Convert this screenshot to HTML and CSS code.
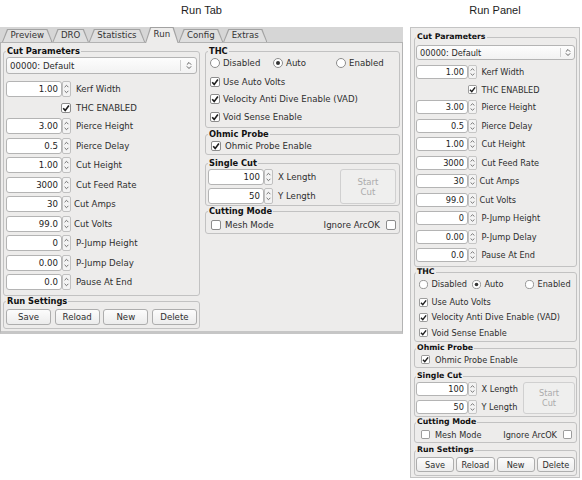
FILE: index.html
```html
<!DOCTYPE html>
<html>
<head>
<meta charset="utf-8">
<title>Run Tab / Run Panel</title>
<link rel="stylesheet" href="styles.css">
</head>
<body>
<div class="screen">
  <section class="col col-tab">
    <div class="caption">Run Tab</div>
    <div class="tabwidget">
      <div class="tabbar">
        <div class="tab"><span>Preview</span></div>
        <div class="tab"><span>DRO</span></div>
        <div class="tab"><span>Statistics</span></div>
        <div class="tab active"><span>Run</span></div>
        <div class="tab"><span>Config</span></div>
        <div class="tab"><span>Extras</span></div>
      </div>
      <div class="pane ui ui-tab">
        <div class="pane-col c1">
          <div class="group g-cut">
            <div class="group-title">Cut Parameters</div>
            <div class="combo"><span class="combo-text">00000: Default</span><span class="combo-btn"><svg viewBox="0 0 7 10"><path d="M1 4 3.5 1.5 6 4M1 6 3.5 8.5 6 6"/></svg></span></div>
            <div class="rows">
              <div class="field"><div class="spin"><span class="spin-val">1.00</span><svg class="arrows" viewBox="0 0 9 16" preserveAspectRatio="none"><rect x=".5" y=".5" width="8" height="15" rx="1.5"/><path d="M2.6 6.2 4.5 4.3 6.4 6.2M2.6 9.8 4.5 11.7 6.4 9.8"/></svg></div><span class="lbl">Kerf Width</span></div>
              <div class="field field-check"><svg class="ind" viewBox="0 0 10 10"><rect class="box" x=".5" y=".5" width="9" height="9" rx="1.5"/><path class="tick" d="M2.2 5.2 4.2 7.4 7.9 2.6"/></svg><span class="lbl">THC ENABLED</span></div>
              <div class="field"><div class="spin"><span class="spin-val">3.00</span><svg class="arrows" viewBox="0 0 9 16" preserveAspectRatio="none"><rect x=".5" y=".5" width="8" height="15" rx="1.5"/><path d="M2.6 6.2 4.5 4.3 6.4 6.2M2.6 9.8 4.5 11.7 6.4 9.8"/></svg></div><span class="lbl">Pierce Height</span></div>
              <div class="field"><div class="spin"><span class="spin-val">0.5</span><svg class="arrows" viewBox="0 0 9 16" preserveAspectRatio="none"><rect x=".5" y=".5" width="8" height="15" rx="1.5"/><path d="M2.6 6.2 4.5 4.3 6.4 6.2M2.6 9.8 4.5 11.7 6.4 9.8"/></svg></div><span class="lbl">Pierce Delay</span></div>
              <div class="field"><div class="spin"><span class="spin-val">1.00</span><svg class="arrows" viewBox="0 0 9 16" preserveAspectRatio="none"><rect x=".5" y=".5" width="8" height="15" rx="1.5"/><path d="M2.6 6.2 4.5 4.3 6.4 6.2M2.6 9.8 4.5 11.7 6.4 9.8"/></svg></div><span class="lbl">Cut Height</span></div>
              <div class="field"><div class="spin"><span class="spin-val">3000</span><svg class="arrows" viewBox="0 0 9 16" preserveAspectRatio="none"><rect x=".5" y=".5" width="8" height="15" rx="1.5"/><path d="M2.6 6.2 4.5 4.3 6.4 6.2M2.6 9.8 4.5 11.7 6.4 9.8"/></svg></div><span class="lbl">Cut Feed Rate</span></div>
              <div class="field"><div class="spin"><span class="spin-val">30</span><svg class="arrows" viewBox="0 0 9 16" preserveAspectRatio="none"><rect x=".5" y=".5" width="8" height="15" rx="1.5"/><path d="M2.6 6.2 4.5 4.3 6.4 6.2M2.6 9.8 4.5 11.7 6.4 9.8"/></svg></div><span class="lbl tight">Cut Amps</span></div>
              <div class="field"><div class="spin"><span class="spin-val">99.0</span><svg class="arrows" viewBox="0 0 9 16" preserveAspectRatio="none"><rect x=".5" y=".5" width="8" height="15" rx="1.5"/><path d="M2.6 6.2 4.5 4.3 6.4 6.2M2.6 9.8 4.5 11.7 6.4 9.8"/></svg></div><span class="lbl tight">Cut Volts</span></div>
              <div class="field"><div class="spin"><span class="spin-val">0</span><svg class="arrows" viewBox="0 0 9 16" preserveAspectRatio="none"><rect x=".5" y=".5" width="8" height="15" rx="1.5"/><path d="M2.6 6.2 4.5 4.3 6.4 6.2M2.6 9.8 4.5 11.7 6.4 9.8"/></svg></div><span class="lbl">P-Jump Height</span></div>
              <div class="field"><div class="spin"><span class="spin-val">0.00</span><svg class="arrows" viewBox="0 0 9 16" preserveAspectRatio="none"><rect x=".5" y=".5" width="8" height="15" rx="1.5"/><path d="M2.6 6.2 4.5 4.3 6.4 6.2M2.6 9.8 4.5 11.7 6.4 9.8"/></svg></div><span class="lbl">P-Jump Delay</span></div>
              <div class="field"><div class="spin"><span class="spin-val">0.0</span><svg class="arrows" viewBox="0 0 9 16" preserveAspectRatio="none"><rect x=".5" y=".5" width="8" height="15" rx="1.5"/><path d="M2.6 6.2 4.5 4.3 6.4 6.2M2.6 9.8 4.5 11.7 6.4 9.8"/></svg></div><span class="lbl">Pause At End</span></div>
            </div>
          </div>
          <div class="group g-run">
            <div class="group-title">Run Settings</div>
            <div class="btns">
              <div class="btn">Save</div>
              <div class="btn">Reload</div>
              <div class="btn">New</div>
              <div class="btn">Delete</div>
            </div>
          </div>
        </div>
        <div class="pane-col c2">
          <div class="group g-thc">
            <div class="group-title">THC</div>
            <div class="radios">
              <div class="opt"><svg class="ind" viewBox="0 0 10 10"><circle class="box" cx="5" cy="5" r="4.5"/></svg><span>Disabled</span></div>
              <div class="opt"><svg class="ind" viewBox="0 0 10 10"><circle class="box" cx="5" cy="5" r="4.5"/><circle class="dot" cx="5" cy="5" r="2"/></svg><span>Auto</span></div>
              <div class="opt"><svg class="ind" viewBox="0 0 10 10"><circle class="box" cx="5" cy="5" r="4.5"/></svg><span>Enabled</span></div>
            </div>
            <div class="checks">
              <div class="opt"><svg class="ind" viewBox="0 0 10 10"><rect class="box" x=".5" y=".5" width="9" height="9" rx="1.5"/><path class="tick" d="M2.2 5.2 4.2 7.4 7.9 2.6"/></svg><span>Use Auto Volts</span></div>
              <div class="opt"><svg class="ind" viewBox="0 0 10 10"><rect class="box" x=".5" y=".5" width="9" height="9" rx="1.5"/><path class="tick" d="M2.2 5.2 4.2 7.4 7.9 2.6"/></svg><span>Velocity Anti Dive Enable (VAD)</span></div>
              <div class="opt"><svg class="ind" viewBox="0 0 10 10"><rect class="box" x=".5" y=".5" width="9" height="9" rx="1.5"/><path class="tick" d="M2.2 5.2 4.2 7.4 7.9 2.6"/></svg><span>Void Sense Enable</span></div>
            </div>
          </div>
          <div class="group g-ohmic">
            <div class="group-title">Ohmic Probe</div>
            <div class="opt loose ohmic-row"><svg class="ind" viewBox="0 0 10 10"><rect class="box" x=".5" y=".5" width="9" height="9" rx="1.5"/><path class="tick" d="M2.2 5.2 4.2 7.4 7.9 2.6"/></svg><span>Ohmic Probe Enable</span></div>
          </div>
          <div class="group g-single">
            <div class="group-title">Single Cut</div>
            <div class="single">
              <div class="single-fields">
                <div class="field"><div class="spin"><span class="spin-val">100</span><svg class="arrows" viewBox="0 0 9 16" preserveAspectRatio="none"><rect x=".5" y=".5" width="8" height="15" rx="1.5"/><path d="M2.6 6.2 4.5 4.3 6.4 6.2M2.6 9.8 4.5 11.7 6.4 9.8"/></svg></div><span class="lbl">X Length</span></div>
                <div class="field"><div class="spin"><span class="spin-val">50</span><svg class="arrows" viewBox="0 0 9 16" preserveAspectRatio="none"><rect x=".5" y=".5" width="8" height="15" rx="1.5"/><path d="M2.6 6.2 4.5 4.3 6.4 6.2M2.6 9.8 4.5 11.7 6.4 9.8"/></svg></div><span class="lbl">Y Length</span></div>
              </div>
              <div class="btn btn-start"><span>Start</span><span>Cut</span></div>
            </div>
          </div>
          <div class="group g-mode">
            <div class="group-title">Cutting Mode</div>
            <div class="mode-row">
              <div class="opt loose"><svg class="ind" viewBox="0 0 10 10"><rect class="box" x=".5" y=".5" width="9" height="9" rx="1.5"/></svg><span>Mesh Mode</span></div>
              <div class="opt rev"><span>Ignore ArcOK</span><svg class="ind" viewBox="0 0 10 10"><rect class="box" x=".5" y=".5" width="9" height="9" rx="1.5"/></svg></div>
            </div>
          </div>
        </div>
      </div>
    </div>
  </section>

  <section class="col col-panel">
    <div class="caption">Run Panel</div>
    <div class="panel ui ui-panel">
      <div class="group g-cut">
        <div class="group-title">Cut Parameters</div>
        <div class="combo"><span class="combo-text">00000: Default</span><span class="combo-btn"><svg viewBox="0 0 7 10"><path d="M1 4 3.5 1.5 6 4M1 6 3.5 8.5 6 6"/></svg></span></div>
        <div class="rows">
          <div class="field"><div class="spin"><span class="spin-val">1.00</span><svg class="arrows" viewBox="0 0 9 16" preserveAspectRatio="none"><rect x=".5" y=".5" width="8" height="15" rx="1.5"/><path d="M2.6 6.2 4.5 4.3 6.4 6.2M2.6 9.8 4.5 11.7 6.4 9.8"/></svg></div><span class="lbl">Kerf Width</span></div>
          <div class="field field-check"><svg class="ind" viewBox="0 0 10 10"><rect class="box" x=".5" y=".5" width="9" height="9" rx="1.5"/><path class="tick" d="M2.2 5.2 4.2 7.4 7.9 2.6"/></svg><span class="lbl">THC ENABLED</span></div>
          <div class="field"><div class="spin"><span class="spin-val">3.00</span><svg class="arrows" viewBox="0 0 9 16" preserveAspectRatio="none"><rect x=".5" y=".5" width="8" height="15" rx="1.5"/><path d="M2.6 6.2 4.5 4.3 6.4 6.2M2.6 9.8 4.5 11.7 6.4 9.8"/></svg></div><span class="lbl">Pierce Height</span></div>
          <div class="field"><div class="spin"><span class="spin-val">0.5</span><svg class="arrows" viewBox="0 0 9 16" preserveAspectRatio="none"><rect x=".5" y=".5" width="8" height="15" rx="1.5"/><path d="M2.6 6.2 4.5 4.3 6.4 6.2M2.6 9.8 4.5 11.7 6.4 9.8"/></svg></div><span class="lbl">Pierce Delay</span></div>
          <div class="field"><div class="spin"><span class="spin-val">1.00</span><svg class="arrows" viewBox="0 0 9 16" preserveAspectRatio="none"><rect x=".5" y=".5" width="8" height="15" rx="1.5"/><path d="M2.6 6.2 4.5 4.3 6.4 6.2M2.6 9.8 4.5 11.7 6.4 9.8"/></svg></div><span class="lbl">Cut Height</span></div>
          <div class="field"><div class="spin"><span class="spin-val">3000</span><svg class="arrows" viewBox="0 0 9 16" preserveAspectRatio="none"><rect x=".5" y=".5" width="8" height="15" rx="1.5"/><path d="M2.6 6.2 4.5 4.3 6.4 6.2M2.6 9.8 4.5 11.7 6.4 9.8"/></svg></div><span class="lbl">Cut Feed Rate</span></div>
          <div class="field"><div class="spin"><span class="spin-val">30</span><svg class="arrows" viewBox="0 0 9 16" preserveAspectRatio="none"><rect x=".5" y=".5" width="8" height="15" rx="1.5"/><path d="M2.6 6.2 4.5 4.3 6.4 6.2M2.6 9.8 4.5 11.7 6.4 9.8"/></svg></div><span class="lbl tight">Cut Amps</span></div>
          <div class="field"><div class="spin"><span class="spin-val">99.0</span><svg class="arrows" viewBox="0 0 9 16" preserveAspectRatio="none"><rect x=".5" y=".5" width="8" height="15" rx="1.5"/><path d="M2.6 6.2 4.5 4.3 6.4 6.2M2.6 9.8 4.5 11.7 6.4 9.8"/></svg></div><span class="lbl tight">Cut Volts</span></div>
          <div class="field"><div class="spin"><span class="spin-val">0</span><svg class="arrows" viewBox="0 0 9 16" preserveAspectRatio="none"><rect x=".5" y=".5" width="8" height="15" rx="1.5"/><path d="M2.6 6.2 4.5 4.3 6.4 6.2M2.6 9.8 4.5 11.7 6.4 9.8"/></svg></div><span class="lbl">P-Jump Height</span></div>
          <div class="field"><div class="spin"><span class="spin-val">0.00</span><svg class="arrows" viewBox="0 0 9 16" preserveAspectRatio="none"><rect x=".5" y=".5" width="8" height="15" rx="1.5"/><path d="M2.6 6.2 4.5 4.3 6.4 6.2M2.6 9.8 4.5 11.7 6.4 9.8"/></svg></div><span class="lbl">P-Jump Delay</span></div>
          <div class="field"><div class="spin"><span class="spin-val">0.0</span><svg class="arrows" viewBox="0 0 9 16" preserveAspectRatio="none"><rect x=".5" y=".5" width="8" height="15" rx="1.5"/><path d="M2.6 6.2 4.5 4.3 6.4 6.2M2.6 9.8 4.5 11.7 6.4 9.8"/></svg></div><span class="lbl">Pause At End</span></div>
        </div>
      </div>
      <div class="group g-thc">
        <div class="group-title">THC</div>
        <div class="radios">
          <div class="opt"><svg class="ind" viewBox="0 0 10 10"><circle class="box" cx="5" cy="5" r="4.5"/></svg><span>Disabled</span></div>
          <div class="opt"><svg class="ind" viewBox="0 0 10 10"><circle class="box" cx="5" cy="5" r="4.5"/><circle class="dot" cx="5" cy="5" r="2"/></svg><span>Auto</span></div>
          <div class="opt"><svg class="ind" viewBox="0 0 10 10"><circle class="box" cx="5" cy="5" r="4.5"/></svg><span>Enabled</span></div>
        </div>
        <div class="checks">
          <div class="opt"><svg class="ind" viewBox="0 0 10 10"><rect class="box" x=".5" y=".5" width="9" height="9" rx="1.5"/><path class="tick" d="M2.2 5.2 4.2 7.4 7.9 2.6"/></svg><span>Use Auto Volts</span></div>
          <div class="opt"><svg class="ind" viewBox="0 0 10 10"><rect class="box" x=".5" y=".5" width="9" height="9" rx="1.5"/><path class="tick" d="M2.2 5.2 4.2 7.4 7.9 2.6"/></svg><span>Velocity Anti Dive Enable (VAD)</span></div>
          <div class="opt"><svg class="ind" viewBox="0 0 10 10"><rect class="box" x=".5" y=".5" width="9" height="9" rx="1.5"/><path class="tick" d="M2.2 5.2 4.2 7.4 7.9 2.6"/></svg><span>Void Sense Enable</span></div>
        </div>
      </div>
      <div class="group g-ohmic">
        <div class="group-title">Ohmic Probe</div>
        <div class="opt loose ohmic-row"><svg class="ind" viewBox="0 0 10 10"><rect class="box" x=".5" y=".5" width="9" height="9" rx="1.5"/><path class="tick" d="M2.2 5.2 4.2 7.4 7.9 2.6"/></svg><span>Ohmic Probe Enable</span></div>
      </div>
      <div class="group g-single">
        <div class="group-title">Single Cut</div>
        <div class="single">
          <div class="single-fields">
            <div class="field"><div class="spin"><span class="spin-val">100</span><svg class="arrows" viewBox="0 0 9 16" preserveAspectRatio="none"><rect x=".5" y=".5" width="8" height="15" rx="1.5"/><path d="M2.6 6.2 4.5 4.3 6.4 6.2M2.6 9.8 4.5 11.7 6.4 9.8"/></svg></div><span class="lbl">X Length</span></div>
            <div class="field"><div class="spin"><span class="spin-val">50</span><svg class="arrows" viewBox="0 0 9 16" preserveAspectRatio="none"><rect x=".5" y=".5" width="8" height="15" rx="1.5"/><path d="M2.6 6.2 4.5 4.3 6.4 6.2M2.6 9.8 4.5 11.7 6.4 9.8"/></svg></div><span class="lbl">Y Length</span></div>
          </div>
          <div class="btn btn-start"><span>Start</span><span>Cut</span></div>
        </div>
      </div>
      <div class="group g-mode">
        <div class="group-title">Cutting Mode</div>
        <div class="mode-row">
          <div class="opt loose"><svg class="ind" viewBox="0 0 10 10"><rect class="box" x=".5" y=".5" width="9" height="9" rx="1.5"/></svg><span>Mesh Mode</span></div>
          <div class="opt rev"><span>Ignore ArcOK</span><svg class="ind" viewBox="0 0 10 10"><rect class="box" x=".5" y=".5" width="9" height="9" rx="1.5"/></svg></div>
        </div>
      </div>
      <div class="group g-run">
        <div class="group-title">Run Settings</div>
        <div class="btns">
          <div class="btn">Save</div>
          <div class="btn">Reload</div>
          <div class="btn">New</div>
          <div class="btn">Delete</div>
        </div>
      </div>
    </div>
  </section>
</div>
</body>
</html>
```

FILE: styles.css
```css
* { box-sizing: border-box; }
html, body { margin: 0; padding: 0; background: #ffffff; }
body {
  width: 582px;
  height: 480px;
  overflow: hidden;
  font-family: "DejaVu Sans", Verdana, sans-serif;
  color: #2e2e2e;
}

.screen { display: flex; align-items: flex-start; gap: 7px; }
.col-tab { flex: none; width: 403px; }
.col-panel { flex: none; width: 170px; }

.caption {
  height: 27px;
  line-height: 20px;
  text-align: center;
  font-family: "Liberation Sans", Arial, sans-serif;
  font-size: 11px;
  color: #1d1d1d;
}

/* ---------- tab bar ---------- */
.tabbar {
  display: flex;
  align-items: flex-end;
  height: 15px;
  padding-left: 2px;
  background: #d6d6d6;
}
.tab {
  position: relative;
  flex: none;
  height: 13px;
  padding: 0 8.5px;
  font-size: 8.6px;
  line-height: 13px;
  color: #333;
  white-space: nowrap;
}
.tab::before,
.tab::after {
  content: "";
  position: absolute;
  clip-path: polygon(0 100%, 5px 0, calc(100% - 5px) 0, 100% 100%);
}
.tab::before { inset: 0; background: #a2a2a2; }
.tab::after { inset: 1px 1px 0 1px; background: #dfdfdf; }
.tab span { position: relative; z-index: 1; }
.tab.active { height: 16px; margin-bottom: -1px; line-height: 15px; z-index: 2; }
.tab.active::after { background: #edeceb; }

/* ---------- containers ---------- */
.pane {
  display: flex;
  align-items: flex-start;
  gap: 5px;
  height: 292px;
  padding: 0 2px;
  background: #edeceb;
  border: 1px solid #b3b3b3;
  border-bottom: 3px solid #c6c6c6;
}
.pane-col { display: flex; flex-direction: column; }
.pane-col.c1 { width: 197px; }
.pane-col.c2 { width: 195px; }

.panel {
  display: flex;
  flex-direction: column;
  padding: 0 2px 1px 3px;
  background: #edeceb;
  border: 1px solid #c4c4c4;
}

/* metrics per variant */
.ui-tab {
  --fs: 8.6px; --tfs: 8.3px;
  --row: 16px; --gap: 3.5px;
  --spin-w: 65px; --arw: 9px; --lbl-gap: 5px;
  --ind: 10px;
  --combo-h: 17px; --combo-mt: 1px; --combo-mb: 7px; --combo-btn: 16px;
  --thc-row: 14px; --crow: 14px; --cgap: 3.3px;
  --btn-h: 16px; --btn-gap: 3.5px; --btns-mt: 3px;
  --gpad: 2px;
  --start-w: 56px; --start-mr: 1px; --s-gap: 3px; --single-mt: 1.5px;
  --radio-mt: 0px; --ohm-mt: 0.5px; --mode-mt: 2px;
  --ind-ml: 2px; --ind-mr: 3px; --loose-ml: 3px; --loose-mr: 4px; --rev-mr: 1px;
}
.ui-panel {
  --fs: 8.2px; --tfs: 7.8px;
  --row: 14px; --gap: 4.5px;
  --spin-w: 61px; --arw: 9px; --lbl-gap: 4.5px;
  --ind: 9px;
  --combo-h: 15px; --combo-mt: 3.5px; --combo-mb: 5px; --combo-btn: 14px;
  --thc-row: 12px; --crow: 13px; --cgap: 2.3px;
  --btn-h: 14.5px; --btn-gap: 2px; --btns-mt: 2.5px;
  --gpad: 1px;
  --start-w: 52px; --start-mr: 0px; --s-gap: 4px; --single-mt: 1px;
  --radio-mt: 1px; --ohm-mt: 0px; --mode-mt: 1.8px;
  --ind-ml: 3px; --ind-mr: 3.5px; --loose-ml: 5px; --loose-mr: 5px; --rev-mr: 3px;
}
.ui { font-size: var(--fs); }

/* ---------- group boxes ---------- */
.group {
  border: 1px solid #c2c2c2;
  border-radius: 3px;
  padding: 0 var(--gpad) var(--pb, 2px);
}
.group-title {
  display: table;
  height: 10px;
  margin-top: -6px;
  padding: 0 1px;
  line-height: 10px;
  font-size: var(--tfs);
  font-weight: bold;
  color: #111;
  background: #edeceb;
  white-space: nowrap;
}

.ui-tab .g-cut    { margin-top: 8px;   --pb: 5px; }
.ui-tab .g-run    { margin-top: 5px;   --pb: 3px; }
.ui-tab .g-thc    { margin-top: 8px;   --pb: 3px; }
.ui-tab .g-ohmic  { margin-top: 6px;   --pb: 1px; }
.ui-tab .g-single { margin-top: 7.5px; --pb: 1px; }
.ui-tab .g-mode   { margin-top: 5px;   --pb: 1px; }

.ui-panel .g-cut    { margin-top: 8.5px; --pb: 4px; }
.ui-panel .g-thc    { margin-top: 4.5px; --pb: 2px; }
.ui-panel .g-ohmic  { margin-top: 6.2px; --pb: 0.5px; }
.ui-panel .g-single { margin-top: 8.7px; --pb: 1.5px; }
.ui-panel .g-mode   { margin-top: 4.7px; --pb: 0.5px; }
.ui-panel .g-run    { margin-top: 7px;   --pb: 3px; }

/* ---------- combo ---------- */
.combo {
  display: flex;
  height: var(--combo-h);
  margin: var(--combo-mt) 0 var(--combo-mb);
  border: 1px solid #b4b4b4;
  border-radius: 3px;
  background: linear-gradient(#fdfdfd, #f2f2f2);
  color: #2a2a2a;
}
.combo-text { flex: 1; display: flex; align-items: center; padding-left: 3px; white-space: nowrap; }
.combo-btn {
  flex: none;
  width: var(--combo-btn);
  margin: 2px 0;
  border-left: 1px solid #cfcfcf;
  display: flex;
  align-items: center;
  justify-content: center;
}
.combo-btn svg { width: 6px; height: 9px; }
.combo-btn path { fill: none; stroke: #555; stroke-width: 1.1; }

/* ---------- spin fields ---------- */
.rows { display: flex; flex-direction: column; gap: var(--gap); }
.field {
  display: grid;
  grid-template-columns: var(--spin-w) auto;
  column-gap: var(--lbl-gap);
  align-items: center;
  height: var(--row);
  white-space: nowrap;
}
.field-check { height: var(--thc-row); }
.field-check .ind { justify-self: end; }
.lbl.tight { margin-left: -2px; }
.spin { display: flex; width: var(--spin-w); height: var(--row); }
.spin-val {
  flex: 1;
  background: #ffffff;
  border: 1px solid #b4b4b4;
  border-radius: 3px;
  padding-right: 3px;
  text-align: right;
  line-height: calc(var(--row) - 2px);
  color: #222;
}
.arrows { flex: none; width: var(--arw); height: 100%; }
.arrows rect { fill: #f3f3f3; stroke: #c0c0c0; stroke-width: 1; }
.arrows path { fill: none; stroke: #707070; stroke-width: 1; }

/* ---------- check boxes and radios ---------- */
.ind { flex: none; width: var(--ind); height: var(--ind); }
.ind .box { fill: #ffffff; stroke: #8c8c8c; stroke-width: 1; }
.ind .tick { fill: none; stroke: #1e1e1e; stroke-width: 1.6; }
.ind .dot { fill: #333333; }

.opt { display: flex; align-items: center; height: var(--crow); white-space: nowrap; }
.opt .ind { margin-left: var(--ind-ml); margin-right: var(--ind-mr); }
.opt.loose .ind { margin-left: var(--loose-ml); margin-right: var(--loose-mr); }
.opt.rev .ind { margin-left: 6px; margin-right: var(--rev-mr); }

.radios { display: grid; grid-template-columns: 1fr 1fr 1fr; margin-top: var(--radio-mt); }
.checks { display: flex; flex-direction: column; gap: var(--cgap); margin-top: 5px; }
.ohmic-row { margin-top: var(--ohm-mt); }
.mode-row { display: flex; justify-content: space-between; margin-top: var(--mode-mt); }

/* ---------- single cut ---------- */
.single { display: flex; justify-content: space-between; align-items: flex-start; margin-top: var(--single-mt); }
.single-fields { display: flex; flex-direction: column; gap: var(--s-gap); }

/* ---------- buttons ---------- */
.btns { display: flex; gap: var(--btn-gap); margin-top: var(--btns-mt); }
.btn {
  flex: 1 1 0;
  height: var(--btn-h);
  display: flex;
  align-items: center;
  justify-content: center;
  border: 1px solid #adadad;
  border-radius: 3px;
  background: linear-gradient(#fcfcfc, #ececec);
  color: #2e2e2e;
  white-space: nowrap;
}
.btn-start {
  flex: none;
  flex-direction: column;
  width: var(--start-w);
  height: calc(var(--row) * 2 + var(--s-gap));
  margin-right: var(--start-mr);
  line-height: 10px;
  color: #ababab;
  border-color: #d0d0d0;
  background: #efefee;
}
```
